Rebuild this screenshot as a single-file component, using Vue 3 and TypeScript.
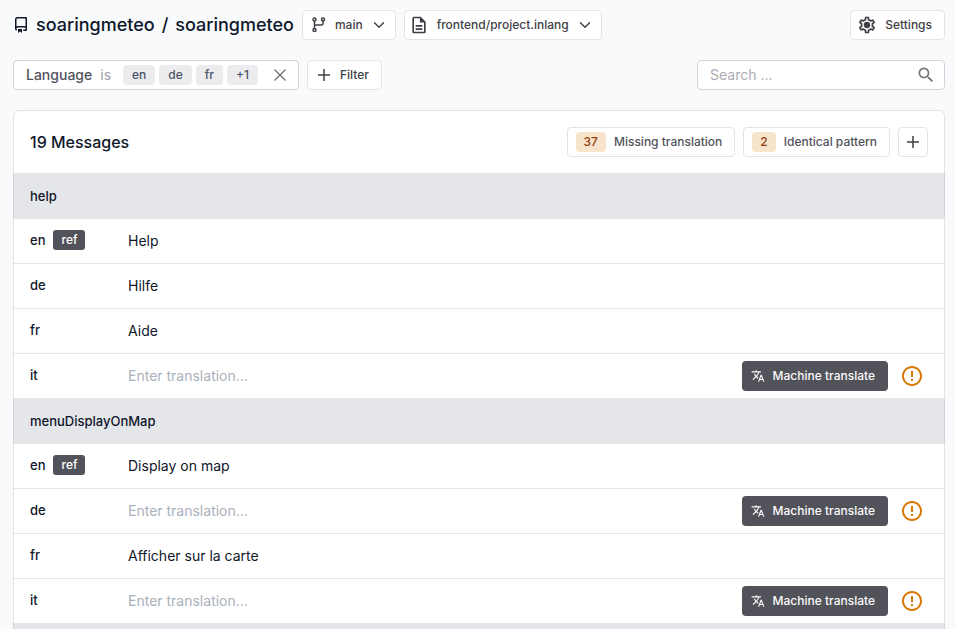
<script setup lang="ts">
import { ref } from 'vue'

interface Variant {
  lang: string
  text: string
  isRef?: boolean
}

interface Message {
  id: string
  variants: Variant[]
}

const search = ref('')
const languages = ['en', 'de', 'fr', '+1']
const lints = [
  { count: 37, label: 'Missing translation' },
  { count: 2, label: 'Identical pattern' },
]

const messages = ref<Message[]>([
  {
    id: 'help',
    variants: [
      { lang: 'en', text: 'Help', isRef: true },
      { lang: 'de', text: 'Hilfe' },
      { lang: 'fr', text: 'Aide' },
      { lang: 'it', text: '' },
    ],
  },
  {
    id: 'menuDisplayOnMap',
    variants: [
      { lang: 'en', text: 'Display on map', isRef: true },
      { lang: 'de', text: '' },
      { lang: 'fr', text: 'Afficher sur la carte' },
      { lang: 'it', text: '' },
    ],
  },
  { id: '', variants: [] },
])
</script>

<template>
  <div class="page">
    <header class="bar">
      <nav class="crumbs">
        <svg class="repo" viewBox="0 0 16 16" width="16" height="16" aria-hidden="true">
          <path fill="currentColor" d="M2 2.5A2.5 2.5 0 0 1 4.5 0h8.75a.75.75 0 0 1 .75.75v12.5a.75.75 0 0 1-.75.75h-2.5a.75.75 0 0 1 0-1.5h1.75v-2h-8a1 1 0 0 0-.714 1.7.75.75 0 1 1-1.072 1.05A2.495 2.495 0 0 1 2 11.5Zm10.5-1h-8a1 1 0 0 0-1 1v6.708A2.486 2.486 0 0 1 4.5 9h8ZM5 12.25a.25.25 0 0 1 .25-.25h3.5a.25.25 0 0 1 .25.25v3.25a.25.25 0 0 1-.4.2l-1.45-1.087a.249.249 0 0 0-.3 0L5.4 15.7a.25.25 0 0 1-.4-.2Z" />
        </svg>
        <a href="#">soaringmeteo</a>
        <span>/</span>
        <a href="#">soaringmeteo</a>
      </nav>
      <button type="button" class="btn picker">
        <svg viewBox="0 0 16 16" width="16" height="16" fill="none" stroke="currentColor" stroke-width="1.5" aria-hidden="true">
          <circle cx="3.5" cy="2.500" r="1.5" />
          <circle cx="12" cy="2.500" r="1.5" />
          <circle cx="3.5" cy="13" r="1.5" />
          <path d="M3.5 4V11.500M12 4V6.500a1.500 1.500 0 0 1-1.500 1.500H3.500" />
        </svg>
        <span>main</span>
        <svg class="chevron" viewBox="0 0 12 12" width="12" height="12" fill="none" stroke="currentColor" stroke-width="1.400" stroke-linecap="round" aria-hidden="true"><path d="M1.500 3.800 6 8.300l4.500-4.500" /></svg>
      </button>
      <button type="button" class="btn picker file">
        <svg viewBox="0 0 24 24" width="20" height="20" aria-hidden="true">
          <path fill="currentColor" d="M8 16h8v2H8zm0-4h8v2H8zm6-10H6c-1.100 0-2 .9-2 2v16c0 1.100.89 2 1.990 2H18c1.100 0 2-.9 2-2V8l-6-6zm4 18H6V4h7v5h5v11z" />
        </svg>
        <span>frontend/project.inlang</span>
        <svg class="chevron" viewBox="0 0 12 12" width="12" height="12" fill="none" stroke="currentColor" stroke-width="1.400" stroke-linecap="round" aria-hidden="true"><path d="M1.500 3.800 6 8.300l4.500-4.500" /></svg>
      </button>
      <button type="button" class="btn settings">
        <svg viewBox="0 0 24 24" width="20" height="20" fill="currentColor" aria-hidden="true">
          <path d="M19.430 12.980c.04-.32.07-.64.07-.98 0-.34-.03-.66-.07-.98l2.110-1.650c.19-.15.24-.42.12-.64l-2-3.460a.5.5 0 0 0-.61-.22l-2.490 1c-.52-.4-1.080-.73-1.690-.98l-.38-2.650A.488.488 0 0 0 14 2h-4c-.25 0-.46.18-.49.42l-.38 2.650c-.61.25-1.170.59-1.690.98l-2.490-1a.566.566 0 0 0-.18-.03c-.17 0-.34.09-.43.25l-2 3.460c-.13.22-.07.49.12.64l2.110 1.650c-.04.32-.07.65-.07.98 0 .33.03.66.07.98l-2.110 1.650c-.19.15-.24.42-.12.64l2 3.460a.5.5 0 0 0 .61.22l2.490-1c.52.4 1.080.73 1.690.98l.38 2.650c.03.24.24.42.49.42h4c.25 0 .46-.18.49-.42l.38-2.650c.61-.25 1.170-.59 1.690-.98l2.490 1c.06.02.12.03.18.03.17 0 .34-.09.43-.25l2-3.460c.12-.22.07-.49-.12-.64l-2.110-1.650zm-1.980-1.710c.04.31.05.52.05.73 0 .21-.02.43-.05.73l-.14 1.130.89.7 1.080.84-.7 1.210-1.270-.51-1.040-.42-.9.68c-.43.32-.84.56-1.250.73l-1.060.43-.16 1.130-.2 1.350h-1.400l-.19-1.350-.16-1.130-1.060-.43c-.43-.18-.83-.41-1.230-.71l-.91-.7-1.060.43-1.270.51-.7-1.210 1.080-.84.89-.7-.14-1.130c-.03-.31-.05-.54-.05-.74s.02-.43.05-.73l.14-1.130-.89-.7-1.080-.84.7-1.210 1.270.51 1.040.42.9-.68c.43-.32.84-.56 1.250-.73l1.060-.43.16-1.130.2-1.350h1.390l.19 1.350.16 1.130 1.060.43c.43.18.83.41 1.230.71l.91.7 1.060-.43 1.270-.51.7 1.210-1.070.85-.89.7.14 1.130z" />
          <circle cx="12" cy="12" r="3.800" />
        </svg>
        <span>Settings</span>
      </button>
    </header>

    <section class="bar filters">
      <div class="filter">
        <span class="field">Language</span>
        <span class="operator">is</span>
        <ul class="tags">
          <li v-for="language in languages" :key="language">{{ language }}</li>
        </ul>
        <button type="button" class="clear" aria-label="Remove filter">
          <svg viewBox="0 0 14 14" width="14" height="14" fill="none" stroke="currentColor" stroke-width="1.400" aria-hidden="true"><path d="m1.500 1.500 11 11m0-11-11 11" /></svg>
        </button>
      </div>
      <button type="button" class="btn add-filter">
        <svg viewBox="0 0 14 14" width="14" height="14" fill="none" stroke="currentColor" stroke-width="1.500" aria-hidden="true"><path d="M7 1v12M1 7h12" /></svg>
        <span>Filter</span>
      </button>
      <label class="search">
        <input v-model="search" type="text" placeholder="Search ..." aria-label="Search messages">
        <svg viewBox="0 0 24 24" width="20" height="20" aria-hidden="true">
          <path fill="currentColor" d="M15.500 14h-.79l-.28-.27A6.471 6.471 0 0 0 16 9.500 6.500 6.500 0 1 0 9.500 16c1.610 0 3.090-.59 4.230-1.570l.27.28v.79l5 4.990L20.490 19l-4.990-5zm-6 0C7.010 14 5 11.990 5 9.500S7.010 5 9.500 5 14 7.010 14 9.500 11.990 14 9.500 14z" />
        </svg>
      </label>
    </section>

    <main class="card">
      <div class="card-head">
        <h1>19 Messages</h1>
        <button v-for="lint in lints" :key="lint.label" type="button" class="btn lint">
          <span class="count">{{ lint.count }}</span>
          <span>{{ lint.label }}</span>
        </button>
        <button type="button" class="btn add" aria-label="Add message">
          <svg viewBox="0 0 14 14" width="14" height="14" fill="none" stroke="currentColor" stroke-width="1.500" aria-hidden="true"><path d="M7 1v12M1 7h12" /></svg>
        </button>
      </div>

      <section v-for="(message, index) in messages" :key="index">
        <h2>{{ message.id }}</h2>
        <div v-for="variant in message.variants" :key="variant.lang" class="row">
          <label :for="`${message.id}-${variant.lang}`" class="lang">
            <span>{{ variant.lang }}</span>
            <span v-if="variant.isRef" class="ref">ref</span>
          </label>
          <input
            :id="`${message.id}-${variant.lang}`"
            v-model="variant.text"
            type="text"
            class="pattern"
            placeholder="Enter translation..."
          >
          <template v-if="!variant.text">
            <button type="button" class="translate">
              <svg viewBox="0 0 24 24" width="14" height="14" aria-hidden="true">
                <path fill="currentColor" d="m12.870 15.070-2.540-2.510.03-.03A17.520 17.520 0 0 0 14.070 6H17V4h-7V2H8v2H1v2h11.170C11.500 7.920 10.440 9.750 9 11.350 8.070 10.320 7.300 9.190 6.690 8h-2c.73 1.630 1.730 3.170 2.980 4.560l-5.090 5.020L4 19l5-5 3.110 3.110.76-2.040zM18.500 10h-2L12 22h2l1.120-3h4.750L21 22h2l-4.500-12zm-2.620 7 1.620-4.330L19.120 17h-3.240z" />
              </svg>
              <span>Machine translate</span>
            </button>
            <svg class="warning" viewBox="0 0 24 24" width="24" height="24" aria-hidden="true">
              <path fill="currentColor" d="M11 15h2v2h-2zm0-8h2v6h-2zm.99-5C6.470 2 2 6.480 2 12s4.470 10 9.990 10C17.520 22 22 17.520 22 12S17.520 2 11.990 2zM12 20c-4.420 0-8-3.580-8-8s3.580-8 8-8 8 3.580 8 8-3.580 8-8 8z" />
            </svg>
          </template>
        </div>
      </section>
    </main>
  </div>
</template>

<style>
body {
  background: #f9fafc;
}
</style>

<style scoped>
.page {
  box-sizing: border-box;
  height: 100vh;
  overflow: hidden;
  padding: 10px 10px 0 13px;
  color: #0f172a;
  font: 400 14px/20px Inter, sans-serif;
}

button,
input {
  font: inherit;
}

svg {
  display: block;
  flex: none;
}

.bar {
  display: flex;
  align-items: center;
  gap: 8px;
  height: 30px;
}

.crumbs {
  display: flex;
  align-items: center;
  gap: 7px;
  font-size: 18px;
  font-weight: 500;
}

.crumbs a {
  color: inherit;
  text-decoration: none;
}

.btn {
  box-sizing: border-box;
  display: flex;
  align-items: center;
  height: 30px;
  padding: 0 12px;
  border: 1px solid #e4e4e7;
  border-radius: 4px;
  background: #fff;
  color: #3f3f46;
  font-size: 12px;
  font-weight: 500;
  white-space: nowrap;
}

.picker {
  gap: 8px;
  padding: 0 10px 0 8px;
}

.picker .chevron {
  margin-left: 2px;
}

.picker.file {
  padding-left: 4px;
}

.settings {
  gap: 8px;
  margin-left: auto;
  padding-left: 6px;
}

.filters {
  margin-top: 20px;
}

.filter {
  box-sizing: border-box;
  display: flex;
  align-items: center;
  gap: 8px;
  height: 30px;
  padding: 0 11px 0 12px;
  border: 1px solid #d4d4d8;
  border-radius: 4px;
  background: #fff;
}

.field {
  color: #52525b;
  font-weight: 500;
}

.operator {
  color: #a1a1aa;
}

.tags {
  display: flex;
  gap: 4px;
  margin: 0 0 0 4px;
  padding: 0;
  list-style: none;
}

.tags li {
  padding: 0 9px;
  border-radius: 4px;
  background: #ececef;
  color: #475569;
  font-size: 12px;
  font-weight: 500;
}

.clear {
  margin-left: 7px;
  padding: 0;
  border: 0;
  background: none;
  color: #71717a;
}

.add-filter {
  gap: 9px;
  padding-left: 9px;
}

.search {
  box-sizing: border-box;
  display: flex;
  align-items: center;
  width: 248px;
  height: 30px;
  margin-left: auto;
  padding: 0 8px 0 12px;
  border: 1px solid #d4d4d8;
  border-radius: 4px;
  background: #fff;
  color: #71717a;
}

.search input,
.pattern {
  flex: 1;
  min-width: 0;
  padding: 0;
  border: 0;
  outline: 0;
  background: none;
  color: #0f172a;
}

.search input::placeholder {
  color: #abacb2;
}

.card {
  margin-top: 20px;
  border: 1px solid #e4e4e7;
  border-radius: 6px;
  background: #fff;
}

.card-head {
  display: flex;
  align-items: center;
  gap: 8px;
  padding: 16px;
}

h1 {
  margin: 0 auto 0 0;
  font-size: 16px;
  font-weight: 500;
}

.lint {
  gap: 8px;
  padding-left: 8px;
  color: #52525b;
}

.count {
  padding: 0 8px;
  border-radius: 4px;
  background: #f8e3cb;
  color: #92400e;
}

.add {
  padding: 0 7px;
}

h2 {
  box-sizing: border-box;
  height: 45px;
  margin: 0 -1px;
  padding: 13px 17px 12px 16px;
  border: solid #d2d3d7;
  border-width: 0 1px;
  background: #e5e6ea;
  font-size: 13px;
  font-weight: 500;
}

.row {
  box-sizing: border-box;
  display: flex;
  align-items: center;
  height: 45px;
  padding: 0 20px 0 16px;
  border-top: 1px solid #e4e5e9;
}

.lang {
  display: flex;
  gap: 8px;
  width: 98px;
  padding-bottom: 2px;
  font-size: 13px;
  font-weight: 500;
}

.ref {
  padding: 0 8px;
  border-radius: 3px;
  background: #52525b;
  color: #fff;
  font-size: 12px;
}

.pattern::placeholder {
  color: #a9b1bc;
}

.translate {
  display: flex;
  align-items: center;
  gap: 8px;
  height: 30px;
  margin-right: 12px;
  padding: 0 13px 0 9px;
  border: 0;
  border-radius: 4px;
  background: #52525b;
  color: #fafafa;
  font-size: 12px;
  font-weight: 500;
}

.warning {
  color: #d97706;
}
</style>
